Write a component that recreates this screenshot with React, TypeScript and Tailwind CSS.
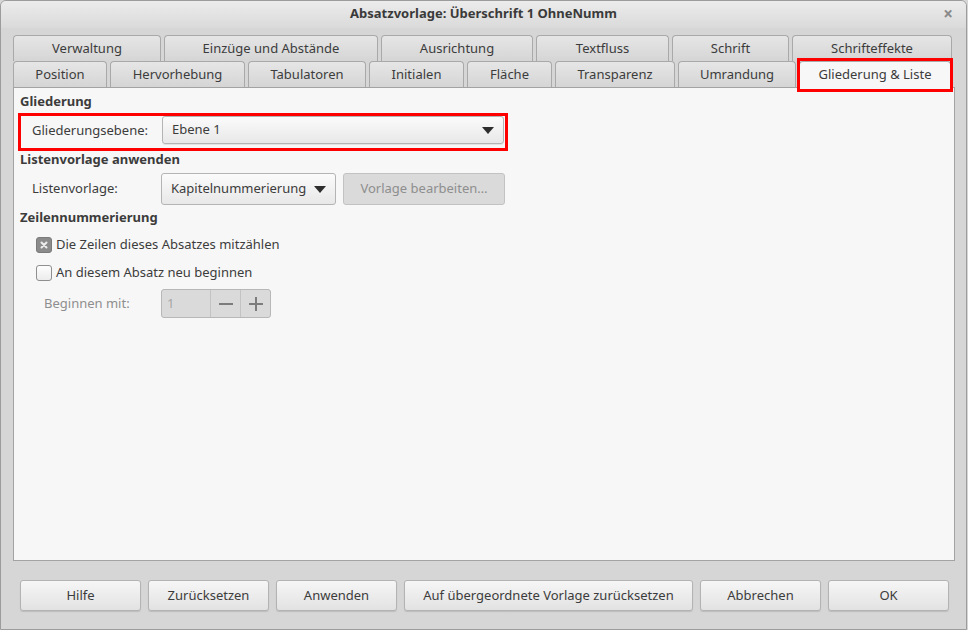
import React from "react";

// Tab rows of the paragraph style dialog
const TOP_TABS = [
  { name: "Verwaltung", w: "w-[148px]" },
  { name: "Einzüge und Abstände", w: "w-[214px]" },
  { name: "Ausrichtung", w: "w-[152px]" },
  { name: "Textfluss", w: "w-[133px]" },
  { name: "Schrift", w: "w-[117px]" },
  { name: "Schrifteffekte", w: "w-[160px]" },
];

const BOTTOM_TABS = [
  { name: "Position", w: "w-[94px]" },
  { name: "Hervorhebung", w: "w-[135px]" },
  { name: "Tabulatoren", w: "w-[118px]" },
  { name: "Initialen", w: "w-[95px]" },
  { name: "Fläche", w: "w-[85px]" },
  { name: "Transparenz", w: "w-[120px]" },
  { name: "Umrandung", w: "w-[118px]" },
];

const BUTTONS = [
  { name: "Hilfe", w: "w-[121px]" },
  { name: "Zurücksetzen", w: "w-[121px]" },
  { name: "Anwenden", w: "w-[121px]" },
  { name: "Auf übergeordnete Vorlage zurücksetzen", w: "w-[289px]" },
  { name: "Abbrechen", w: "w-[121px]" },
  { name: "OK", w: "w-[121px]" },
];

function Tab({ name, w }: { name: string; w: string }) {
  return (
    <div
      className={`${w} h-[26px] shrink-0 flex items-center justify-center rounded-t-[4px] border border-b-0 border-[#a9a9a9] bg-gradient-to-b from-[#e6e6e6] to-[#d5d5d5] text-[13px] text-[#3c3c3c]`}
    >
      {name}
    </div>
  );
}

function Caret() {
  return (
    <svg width="12" height="7" viewBox="0 0 12 7">
      <path d="M0 0h12L6 7z" fill="#2e2e2e" />
    </svg>
  );
}

export default function App() {
  return (
    <div
      className="w-[968px] h-[630px] bg-[#d6d6d6] text-[#3c3c3c] text-[13px] overflow-hidden"
      style={{ fontFamily: '"Noto Sans", "DejaVu Sans", sans-serif' }}
    >
      <div className="w-[967px] h-[630px] flex flex-col border border-[#9c9c9c] rounded-t-[6px] overflow-hidden">
        {/* Title bar */}
        <div className="relative h-[27px] shrink-0 flex items-center justify-center bg-gradient-to-b from-[#ececec] to-[#dadada]">
          <span className="font-bold text-[13px] text-[#3a3a3a] -mt-[1px]">Absatzvorlage: Überschrift 1 OhneNumm</span>
          <span className="absolute right-[13px] top-[4px] text-[17px] font-bold text-[#8a8a8a] leading-none">×</span>
        </div>

        {/* Tabs */}
        <div className="pl-[12px] pt-[7px] flex flex-col">
          <div className="flex gap-[3px]">
            {TOP_TABS.map((t) => (
              <Tab key={t.name} {...t} />
            ))}
          </div>
          <div className="flex gap-[3px]">
            {BOTTOM_TABS.map((t) => (
              <Tab key={t.name} {...t} />
            ))}
            <div className="relative w-[152px] h-[27px] -mb-[1px] z-10 shrink-0 flex items-center justify-center rounded-t-[4px] border border-b-0 border-[#a9a9a9] bg-[#f7f7f7] text-[13px] text-[#3c3c3c]">
              Gliederung &amp; Liste
              <div className="absolute -left-[3px] -right-[3px] -top-[4px] -bottom-[4px] border-[3px] border-[#ff0000]" />
            </div>
          </div>

          {/* Panel */}
          <div className="w-[942px] h-[474px] border border-[#a3a3a3] bg-[#f7f7f7] pl-[6px] pt-[5px] flex flex-col">
            <div className="font-bold h-[17px] leading-[17px]">Gliederung</div>

            <div className="mt-[3px] -ml-[2px] w-[490px] h-[38px] border-[3px] border-[#ff0000] flex items-start pl-[11px]">
              <span className="w-[130px] h-[28px] leading-[28px]">Gliederungsebene:</span>
              <div className="w-[342px] h-[28px] flex items-center justify-between pl-[9px] pr-[9px] rounded-[3px] border border-[#b4b4b4] bg-gradient-to-b from-[#fbfbfb] to-[#e8e8e8] shadow-[0_1px_0_rgba(0,0,0,0.08)]">
                <span>Ebene 1</span>
                <Caret />
              </div>
            </div>

            <div className="font-bold h-[17px] leading-[17px]">Listenvorlage anwenden</div>

            <div className="mt-[5px] flex items-center pl-[12px]">
              <span className="w-[129px]">Listenvorlage:</span>
              <div className="w-[175px] h-[32px] flex items-center justify-between pl-[9px] pr-[9px] rounded-[3px] border border-[#b4b4b4] bg-gradient-to-b from-[#fbfbfb] to-[#e8e8e8]">
                <span>Kapitelnummerierung</span>
                <Caret />
              </div>
              <div className="ml-[7px] w-[162px] h-[32px] flex items-center justify-center rounded-[3px] border border-[#c2c2c2] bg-[#dadada] text-[#8e8e8e]">
                Vorlage bearbeiten…
              </div>
            </div>

            <div className="font-bold h-[17px] leading-[17px] mt-[4px]">Zeilennummerierung</div>

            <div className="mt-[10px] flex items-center pl-[16px] h-[17px]">
              <div className="w-[16px] h-[16px] rounded-[3px] bg-[#8b8b8b] border border-[#7a7a7a] flex items-center justify-center">
                <svg width="8" height="8" viewBox="0 0 8 8">
                  <path d="M1.5 1.5l5 5M6.5 1.5l-5 5" stroke="#ededed" strokeWidth="2" strokeLinecap="round" />
                </svg>
              </div>
              <span className="ml-[4px]">Die Zeilen dieses Absatzes mitzählen</span>
            </div>

            <div className="mt-[11px] flex items-center pl-[16px] h-[17px]">
              <div className="w-[16px] h-[16px] rounded-[3px] bg-gradient-to-b from-[#fdfdfd] to-[#ececec] border border-[#8f8f8f]" />
              <span className="ml-[4px]">An diesem Absatz neu beginnen</span>
            </div>

            <div className="mt-[8px] flex items-center pl-[24px]">
              <span className="w-[117px] text-[#8e8e8e]">Beginnen mit:</span>
              <div className="w-[110px] h-[29px] flex rounded-[3px] border border-[#b7b7b7] bg-[#dadada]">
                <div className="w-[49px] flex items-center pl-[5px] text-[#a6a6a6] border-r border-[#c3c3c3]">1</div>
                <div className="w-[30px] flex items-center justify-center border-r border-[#c3c3c3]">
                  <svg width="14" height="14" viewBox="0 0 14 14">
                    <path d="M0 7h14" stroke="#7c7c7c" strokeWidth="2" />
                  </svg>
                </div>
                <div className="flex-1 flex items-center justify-center">
                  <svg width="14" height="14" viewBox="0 0 14 14">
                    <path d="M0 7h14M7 0v14" stroke="#7c7c7c" strokeWidth="2" />
                  </svg>
                </div>
              </div>
            </div>
          </div>
        </div>

        {/* Bottom buttons */}
        <div className="mt-[19px] pl-[19px] flex gap-[7px]">
          {BUTTONS.map((b) => (
            <div
              key={b.name}
              className={`${b.w} h-[31px] shrink-0 flex items-center justify-center rounded-[3px] border border-[#b3b3b3] bg-gradient-to-b from-[#f6f6f6] to-[#e2e2e2] shadow-[0_1px_1px_rgba(0,0,0,0.12)]`}
            >
              {b.name}
            </div>
          ))}
        </div>
      </div>
    </div>
  );
}
